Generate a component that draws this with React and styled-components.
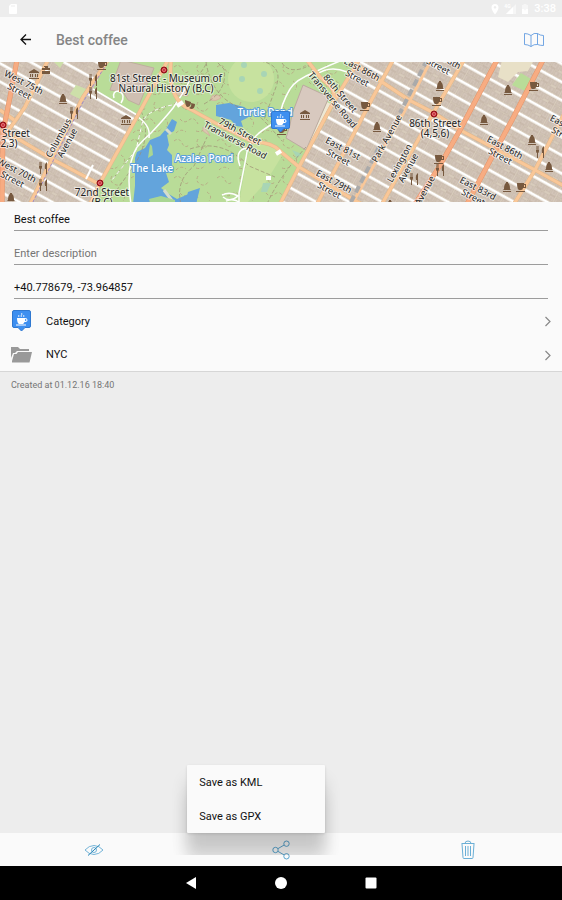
import React from 'react'
import { useState } from "react";
import styled, { createGlobalStyle } from 'styled-components';

const NORTH = 29;

const avenues = [
    "M17 -2 L10 35 L3 70 L2 142",
    "M497 -2 L460 68 L439 105 L415 142",
    "M543 -2 L512 58 L492 95 L467 142",
];

const smallAvenues = [
    "M48 -2 L25 45 L3 76",
    "M108 -2 L83 35 L53 95 L30 142",
    "M168 -2 L138 53 L100 121 L90 142",
    "M359 -2 L333 41 L299 105 L280 142",
    "M393 -2 L372 37 L317 142",
    "M464 -2 L435 48 L405 101 L382 142",
    "M564 52 L535 108 L514 142",
    "M343 -6 L376 16 L409 38 L434 51 L460 68 L535 108 L564 124",
    "M299 105 L349 135 L365 144",
    "M-2 68 L20 78 L50 96 L97 121",
    "M0 48 L14 58",
    "M171 -2 Q169 22 175 33 Q180 43 190 47 L219 63 L253 80 Q272 80 280 89 L299 105",
    "M307 -2 L320 15 L331 25 Q336 32 333 41",
];

const paths = [
    "M131 142 Q125 104 137 85 Q144 77 151 71 Q166 55 173 46 Q183 32 190 18",
    "M340 -1 Q323 6 315 10 Q295 18 290 27 Q281 42 279 58 Q262 68 258 72 Q247 82 246 96 L239 131 L239 142",
    "M138 55 Q151 64 149 76",
    "M240 104 Q234 88 247 86",
    "M222 133 q8 -4 16 1 q-8 7 -15 1 M226 139 q7 -3 13 1",
    "M93 27 L137 53 M114 36 q-2 -7 5 -7 q7 4 2 12",
    "M316 13 Q329 3 347 10",
];

const trails = [
    "M172 43 Q151 47 143 58 L136 88 L112 118",
    "M141 49 Q153 75 133 105 L107 142",
    "M174 20 Q196 25 208 -2",
    "M206 0 Q213 43 254 49 Q266 60 282 79",
    "M190 87 Q222 76 249 104 L275 115",
    "M181 142 Q175 119 194 104 L207 75",
    "M260 -1 Q284 3 276 25 L264 58",
    "M267 142 Q279 115 306 85",
    "M204 42 Q228 29 224 7 L216 -1",
    "M312 2 Q291 14 282 1",
];

const labels = [
    { x: 22, y: 24, rotate: 27, lines: ["West 75th", "Street"] },
    { x: 15, y: 112, rotate: 27, lines: ["West 70th", "Street"] },
    { x: 62, y: 78, rotate: -61, lines: ["Columbus", "Avenue"] },
    { x: 166, y: 21, rotate: 0, lines: ["81st Street - Museum of", "Natural History (B,C)"] },
    { x: 102, y: 135, rotate: 0, lines: ["72nd Street", "(B,C)"] },
    { x: 435, y: 66, rotate: 0, lines: ["86th Street", "(4,5,6)"] },
    { x: 16, y: 71, rotate: 0, lines: ["Street"] },
    { x: 9, y: 81, rotate: 0, lines: ["2,3)"] },
    { x: 238, y: 73, rotate: 28, lines: ["79th Street", "Transverse Road"] },
    { x: 337, y: 34, rotate: 50, lines: ["86th Street", "Transverse Road"] },
    { x: 360, y: 11, rotate: 28, lines: ["East 86th", "Street"] },
    { x: 341, y: 90, rotate: 28, lines: ["East 81st", "Street"] },
    { x: 332, y: 123, rotate: 28, lines: ["East 79th", "Street"] },
    { x: 386, y: 76, rotate: -61, lines: ["Park Avenue"] },
    { x: 403, y: 103, rotate: -61, lines: ["Lexington", "Avenue"] },
    { x: 424, y: 128, rotate: -61, lines: ["Avenue"] },
    { x: 503, y: 89, rotate: 28, lines: ["East 86th", "Street"] },
    { x: 476, y: 130, rotate: 28, lines: ["East 83rd", "Street"] },
    { x: 566, y: 68, rotate: 28, lines: ["East 87th", "Street"] },
    { x: 441, y: -1, rotate: 28, lines: ["East 88th", "Street"] },
];

const waterLabels = [
    { x: 265, y: 54, text: "Turtle Pond" },
    { x: 204, y: 100, text: "Azalea Pond" },
    { x: 152, y: 110, text: "The Lake" },
];

const stations = [[164, 8], [100, 121], [3, 63], [434, 52]];

const places = {
    fork: [[93, 18], [93, 31], [74, 51], [43, 106], [43, 123], [540, 90], [440, 108], [414, 117]],
    bell: [[63, 37], [11, 136], [440, 24], [508, 28], [484, 58], [532, 78], [377, 65], [549, 105], [507, 125], [390, 143]],
    cup: [[102, 3], [437, 39], [534, 24], [439, 97], [521, 125], [365, 44], [282, 68]],
    museum: [[126, 58], [34, 12], [305, 53]],
    bag: [[46, 8]],
    mask: [[190, 42]],
};

const glyphs = {
    fork: "M-4 -6 V-1 Q-4 1 -3 1 V6 H-2 V1 Q-1 1 -1 -1 V-6 H-1.500 V-2 H-2.200 V-6 H-2.800 V-2 H-3.500 V-6Z M4 -6 Q1 -4 2 1 H3 V6 H4Z",
    bell: "M-1 -5 H1 V-4 Q3 -3 3 2 L4 3 H-4 L-3 2 Q-3 -3 -1 -4Z M-4 4 H4 V5 H-4Z",
    cup: "M-4 -4 H3 V-3 H5 V1 H2 Q2 3 0 3 H-2 Q-4 2 -4 -4Z M3 -2 V0 H4 V-2Z M-5 4 H4 V5 H-5Z",
    museum: "M0 -5 L5 -2 V-1 H-5 V-2Z M-4 0 H-3 V3 H-4Z M-2 0 H-1 V3 H-2Z M1 0 H2 V3 H1Z M3 0 H4 V3 H3Z M-5 4 H5 V5 H-5Z",
    bag: "M-2 -4 H2 V-2 H4 V0 H-4 V-2 H-1 V-3 H-2Z M-4 1 H4 V4 H-4Z",
    mask: "M-5 -4 L1 -2 Q1 3 -3 3 Q-5 1 -5 -4Z M1 -1 L5 0 Q5 5 1 5 L-1 4 Q2 3 1 -1Z",
};

function PinShape() {
    return (
        <>
            <path d="M2 .5 H17 Q18.500 .5 18.500 2 V16 Q18.500 17.500 17 17.500 H13 L9.500 21 L6 17.500 H2 Q.5 17.500 .5 16 V2 Q.5 .5 2 .5Z" fill="#3d8ff0" stroke="#2f78d0" />
            <path d="M5 8 H13 Q15.500 8 15.500 10 Q15.500 12 12.500 12 Q12 13.500 11 14 H7 Q5 13 5 8Z M13 9 V11 Q14.500 11 14.500 10 Q14.500 9 13 9Z M4 14.500 H14 V15.500 H4Z" fill="#fff" />
            <path d="M7 7 q-1 -1 0 -2 M9.500 7 q-1 -1 0 -2 t0 -2 M12 7 q-1 -1 0 -2" fill="none" stroke="#fff" strokeWidth=".8" />
        </>
    );
}

function CityMap() {
    return (
        <MapDrawing viewBox="0 0 562 140" preserveAspectRatio="xMidYMid slice" role="img" aria-label="Map around Best coffee">
            <defs>
                <pattern id="blocks" width="46" height="16" patternUnits="userSpaceOnUse" patternTransform={`rotate(${NORTH})`}>
                    <rect width="46" height="16" fill="#e0d5c6" />
                    <path d="M0 3 h9 v5 h-9z M10 3 h7 v6 h-7z M18 3 h5 v5 h-5z M24 3 h9 v6 h-9z M34 3 h4 v5 h-4z M39 3 h6 v6 h-6z M0 9 h5 v6 h-5z M6 9 h9 v6 h-9z M16 10 h5 v5 h-5z M22 9 h7 v6 h-7z M30 10 h8 v5 h-8z M39 9 h6 v6 h-6z" fill="#d3c5b9" stroke="#bbab9d" strokeWidth=".5" />
                    <path d="M3 3 v3 M6 4 v4 M13 3 v4 M27 3 v3 M30 4 v4 M42 3 v4 M3 10 v4 M9 11 v4 M12 10 v4 M26 10 v4 M34 11 v3 M42 11 v4" stroke="#bcac9e" strokeWidth=".6" />
                    <rect width="46" height="2.500" fill="#fff" />
                </pattern>
                <pattern id="woods" width="43" height="37" patternUnits="userSpaceOnUse">
                    <path d="M2 5 q5 -4 8 2 t7 2 M26 3 q-3 5 2 8 t8 -2 M8 20 q4 5 9 1 t9 4 M35 19 q6 4 2 9 M4 34 q5 -5 10 -1 M24 32 q6 2 9 -3" fill="none" stroke="#b59a7c" strokeWidth=".7" strokeDasharray="3 2" />
                </pattern>
            </defs>
            <rect width="562" height="140" fill="url(#blocks)" />
            <path d="M107 -2 H359 L280 142 H90 L137 53 L93 28Z" fill="#b9dc98" />
            <path d="M168 -2 H359 L280 142 H90Z" fill="url(#woods)" />
            <path d="M121 -2 L154 6 L139 43 L128 38 L123 30 L110 28Z" fill="#cfbfb2" stroke="#bfae9f" />
            <path d="M70 32 L76 23 L89 28 L82 38Z M52 -2 H65 L60 6Z" fill="#cddfa9" />
            <path d="M502 -2 H534 L528 9 L518 10 L508 20 L498 15Z" fill="#e8e0c7" />
            <path d="M521 11 L531 17 L525 29 L512 23Z" fill="#b9dc98" />
            <path d="M331 42 L327 40 L306 87 L309 89Z" fill="#eee8d4" />
            <ellipse cx="251" cy="17" rx="23" ry="23" fill="#c7e29f" />
            <path d="M253 81 Q275 82 283 92 L266 120 L246 142 H239 L247 96Z" fill="#c7e29f" />
            <g fill="#a8d5b5">
                <circle cx="242" cy="17" r="3" /><circle cx="244" cy="3" r="3" /><circle cx="264" cy="12" r="3" /><circle cx="260" cy="29" r="3" />
                <path d="M292 88 l10 4 l-5 4z M263 121 l8 0 l-4 9 h-6z" />
            </g>
            <path d="M212 34 q6 -3 9 2 q-5 4 -11 2z M203 65 q5 3 7 9 l-7 -5z M176 23 l10 3 l2 8 l-12 -1z" fill="#dac7ae" stroke="#d49b98" strokeWidth=".5" />
            <path d="M303 23 L329 35 L306 88 L286 76 L290 63 L292 52Z" fill="#d8c9bf" stroke="#bcaaa0" />
            <g fill="#63a4dc">
                <path d="M216 43 L229 41 L244 45 L253 51 L247 56 L241 59 L243 65 L236 64 L231 58 L216 54Z" />
                <path d="M135 96 L137 90 L145 86 L150 78 L160 74 L166 67 L172 57 L177 60 L174 69 L167 73 L169 83 L167 88 L172 93 L172 103 L166 111 L169 120 L161 126 L167 131 L177 137 L191 131 L199 127 L196 142 H133 L135 124Z" />
                <path d="M188 130 L200 126 L196 142 H185Z" />
            </g>
            <path d="M164 128 l9 12 M166 67 l5 5" stroke="#d5dccb" strokeWidth="3" />
            <path d="M150 82 l-2 14 l5 -3 l-1 -9z M149 137 l12 -3 l14 4 v3 h-25z" fill="#a9d693" />
            <g fill="none">
                <g stroke="#9c8c72" strokeWidth=".7" strokeDasharray="4 2">{trails.map(d => <path key={d} d={d} />)}</g>
                <path d="M172 43 Q151 47 143 58 L136 88 L112 118" stroke="#fff" strokeDasharray="4 3" />
                <g stroke="#fff" strokeWidth="1.500">{paths.map(d => <path key={d} d={d} />)}</g>
                <g stroke="#e3b88a" strokeWidth="4">{smallAvenues.map(d => <path key={d} d={d} />)}</g>
                <g stroke="#f9c798" strokeWidth="3">{smallAvenues.map(d => <path key={d} d={d} />)}</g>
                <g stroke="#e69468" strokeWidth="5">{avenues.map(d => <path key={d} d={d} />)}</g>
                <g stroke="#f7ac82" strokeWidth="4">{avenues.map(d => <path key={d} d={d} />)}</g>
                <path d="M431 -2 L404 50 L352 142" stroke="#f9c798" strokeWidth="3" />
                <path d="M427 -2 L400 51 M379 85 L350 142" stroke="#aaa" strokeWidth="4" strokeDasharray="7 4" />
                <path d="M107 1 L83 40 L53 99 L32 142" stroke="#8b7bd0" strokeWidth=".8" strokeDasharray="3 2" />
                <path d="M177 44 l6 -4 M276 92 l5 -3 M266 116 l5 0" stroke="#fff" strokeWidth="4" />
                <path d="M93 103 L86 117" stroke="#fff" strokeWidth="2" />
            </g>
            {Object.keys(places).map(kind => places[kind].map(([x, y]) => (
                <path key={kind + x + y} d={glyphs[kind]} transform={`translate(${x} ${y})`} fill="#77593f" fillRule="evenodd" />
            )))}
            {stations.map(([x, y]) => (
                <g key={x}>
                    <circle cx={x} cy={y} r="3" fill="#c31f2b" stroke="#8f1119" />
                    <circle cx={x} cy={y} r="1.500" fill="none" stroke="#eba0a0" strokeWidth=".7" />
                </g>
            ))}
            {labels.map(({ x, y, rotate, lines }) => (
                <StreetLabel key={x + lines[0]} transform={`translate(${x} ${y}) rotate(${rotate})`} $size={rotate ? 9 : 10}>
                    {lines.map((line, i) => (
                        <tspan key={line} x="0" y={4 + i * 10 - (lines.length - 1) * 5}>{line}</tspan>
                    ))}
                </StreetLabel>
            ))}
            {waterLabels.map(({ x, y, text }) => <WaterLabel key={text} x={x} y={y}>{text}</WaterLabel>)}
            <g transform="translate(271 49)"><PinShape /></g>
        </MapDrawing>
    );
}

function Chevron() {
    return (
        <svg width="8" height="12" viewBox="0 0 8 12" fill="none" stroke="#888" strokeWidth="1.200" aria-hidden="true">
            <path d="M1.500 2 L6 6.500 L1.500 11" />
        </svg>
    );
}

function App() {
    const [name, setName] = useState("Best coffee");
    const [description, setDescription] = useState("");
    const [coordinates, setCoordinates] = useState("+40.778679, -73.964857");
    const [menuOpen, setMenuOpen] = useState(true);

    return (
        <Screen>
            <GlobalStyle />
            <StatusBar>
                <svg width="10" height="12" viewBox="0 0 10 12" aria-hidden="true">
                    <path d="M3 1 H8 Q9 1 9 2 V10 Q9 11 8 11 H2 Q1 11 1 10 V3Z" fill="#fff" />
                    <path d="M4 2 v2 M6 2 v2" stroke="#ededed" />
                </svg>
                <StatusIcons>
                    <svg width="8" height="12" viewBox="0 0 8 12" fill="#fff" aria-hidden="true">
                        <path fillRule="evenodd" d="M4 1 Q7.500 1 7.500 4.500 Q7.500 7 4 11.500 Q.5 7 .5 4.500 Q.5 1 4 1Z M4 3 a1.300 1.300 0 1 0 .01 0Z" />
                    </svg>
                    <Signal>
                        <span>4G</span>
                        <svg width="10" height="10" viewBox="0 0 10 10" aria-hidden="true">
                            <path d="M10 0 V10 H0Z" fill="#f6f6f6" />
                            <path d="M7 3 V10 H0Z" fill="#fff" />
                        </svg>
                    </Signal>
                    <svg width="8" height="12" viewBox="0 0 8 12" aria-hidden="true">
                        <path d="M1 2 H2.500 V1 H5.500 V2 H7 V11 H1Z" fill="#f6f6f6" />
                        <path d="M1 6 H3 L4 8 L5 6 H7 V11 H1Z" fill="#fff" />
                    </svg>
                    <Clock>3:38</Clock>
                </StatusIcons>
            </StatusBar>
            <Header>
                <IconButton aria-label="Back">
                    <svg width="12" height="12" viewBox="0 0 12 12" fill="none" stroke="#111" strokeWidth="1.300">
                        <path d="M11 5.500 H1 M6 .5 L1 5.500 L6 10.500" />
                    </svg>
                </IconButton>
                <Title>Best coffee</Title>
                <IconButton aria-label="Show on map">
                    <svg width="20" height="16" viewBox="0 0 20 16" fill="none" stroke="#639ce0">
                        <path d="M.5 1.500 Q4 1.500 7 3.500 Q10 .5 13.500 1.500 Q16 3.500 19.500 3.500 V13.500 Q16 13.500 13.500 12.500 Q10 12 7 14.500 Q4 12.500 .5 12.500Z M7 3.500 V14.500 M13.500 1.500 V12.500" strokeWidth=".9" />
                    </svg>
                </IconButton>
            </Header>
            <CityMap />
            <Details>
                <Field aria-label="Name" value={name} onChange={e => setName(e.target.value)} />
                <Field aria-label="Description" placeholder="Enter description" value={description} onChange={e => setDescription(e.target.value)} />
                <Field aria-label="Coordinates" value={coordinates} onChange={e => setCoordinates(e.target.value)} />
                <Rows>
                    <Row>
                        <RowIcon>
                            <svg width="19" height="22" viewBox="0 0 19 22" aria-hidden="true"><PinShape /></svg>
                        </RowIcon>
                        <RowText>Category</RowText>
                        <Chevron />
                    </Row>
                    <Row>
                        <RowIcon>
                            <svg width="21" height="16" viewBox="0 0 21 16" fill="#999" aria-hidden="true">
                                <path d="M0 0 H7 L9 2 H18 V4 H6 L4 6 H2 L0 11Z" />
                                <path d="M7 5 H21 L18.500 15.500 H1 V14 L3 7 H5.500Z" />
                            </svg>
                        </RowIcon>
                        <RowText>NYC</RowText>
                        <Chevron />
                    </Row>
                </Rows>
            </Details>
            <Created>Created at 01.12.16 18:40</Created>
            <Toolbar>
                <Slot>
                    <ToolButton aria-label="Hide">
                        <svg width="20" height="16" viewBox="0 0 20 16" fill="none" stroke="#74b4d8">
                            <path d="M1 8 Q5 3.500 10 3.500 Q15 3.500 19 8 Q15 12.500 10 12.500 Q5 12.500 1 8Z" />
                            <circle cx="10" cy="8" r="2.500" />
                            <path d="M4 13.500 L16 2.500" stroke="#2384b8" />
                        </svg>
                    </ToolButton>
                </Slot>
                <Slot>
                    <ToolButton aria-label="Share" aria-expanded={menuOpen} onClick={() => setMenuOpen(!menuOpen)}>
                        <svg width="18" height="20" viewBox="0 0 18 20" fill="none" stroke="#4a9cc9" strokeWidth=".9">
                            <circle cx="3.500" cy="10" r="2.700" />
                            <circle cx="14.500" cy="3.700" r="2.700" />
                            <circle cx="14.500" cy="16.300" r="2.700" />
                            <path d="M6 8.600 L12 5.100 M6 11.400 L12 14.900" />
                        </svg>
                    </ToolButton>
                    {menuOpen && (
                        <MenuArea>
                            <Menu>
                                <MenuItem onClick={() => setMenuOpen(false)}>Save as KML</MenuItem>
                                <MenuItem onClick={() => setMenuOpen(false)}>Save as GPX</MenuItem>
                            </Menu>
                        </MenuArea>
                    )}
                </Slot>
                <Slot>
                    <ToolButton aria-label="Delete">
                        <svg width="14" height="20" viewBox="0 0 14 20" fill="none" stroke="#6aafd6">
                            <path d="M.5 3.500 H13.500 M1 4 L2 17.500 Q2 18.500 3 18.500 H11 Q12 18.500 12 17.500 L13 4 M4 3.500 Q4 1 7 1 Q10 1 10 3.500 M4.500 6 V16 M7 6 V16 M9.500 6 V16" />
                        </svg>
                    </ToolButton>
                </Slot>
            </Toolbar>
            <SystemNav>
                <NavButton aria-label="System back">
                    <svg width="12" height="12" viewBox="0 0 12 12"><path d="M11 0 V12 L1 6Z" fill="#fff" /></svg>
                </NavButton>
                <NavButton aria-label="Home">
                    <svg width="12" height="12" viewBox="0 0 12 12"><circle cx="6" cy="6" r="6" fill="#fff" /></svg>
                </NavButton>
                <NavButton aria-label="Recent apps">
                    <svg width="12" height="12" viewBox="0 0 12 12"><rect x=".5" y=".5" width="11" height="11" rx="1" fill="#fff" /></svg>
                </NavButton>
            </SystemNav>
        </Screen>
    );
}

const GlobalStyle = createGlobalStyle`
    *{
        box-sizing: border-box;
    }
    body{
        margin: 0;
        background: #ededed;
        color: #111;
        font-family: Roboto, "Liberation Sans", sans-serif;
        font-size: 11px;
    }
    button, input{
        font: inherit;
        color: inherit;
    }
    button{
        border: none;
        background: none;
        padding: 0;
        cursor: pointer;
    }
    svg{
        display: block;
        flex: none;
    }
`;

const Screen = styled.div`
    display: flex;
    flex-direction: column;
    min-height: 100vh;
`;

const StatusBar = styled.div`
    display: flex;
    align-items: center;
    justify-content: space-between;
    height: 17px;
    padding: 0 6px 0 8px;
    color: #fff;
`;

const StatusIcons = styled.div`
    display: flex;
    align-items: center;
    gap: 5px;
`;

const Signal = styled.div`
    position: relative;
    padding-left: 2px;
    span{
        position: absolute;
        left: 0;
        top: 0;
        font-size: 5px;
        line-height: 5px;
        font-weight: 700;
    }
`;

const Clock = styled.span`
    font-weight: 500;
`;

const Header = styled.header`
    display: flex;
    align-items: center;
    height: 45px;
    padding: 0 18px 0 20px;
    background: #fafafa;
`;

const IconButton = styled.button`
    display: flex;
`;

const Title = styled.h1`
    flex: 1;
    margin: 0 24px;
    font-size: 14px;
    font-weight: 500;
    color: #858585;
`;

const MapDrawing = styled.svg`
    width: 100%;
    height: 140px;
`;

const StreetLabel = styled.text`
    font-family: "Noto Sans", sans-serif;
    font-size: ${props => props.$size}px;
    fill: #222;
    stroke: rgba(255, 255, 255, 0.6);
    stroke-width: 2px;
    stroke-linejoin: round;
    paint-order: stroke;
    text-anchor: middle;
`;

const WaterLabel = styled(StreetLabel).attrs({ $size: 10 })`
    fill: #fff;
    stroke: #5a9fda;
    font-weight: 500;
`;

const Details = styled.main`
    display: flex;
    flex-direction: column;
    background: #fafafa;
    border-bottom: 1px solid #d6d6d6;
`;

const Field = styled.input`
    height: 34px;
    margin: 0 14px;
    padding: 12px 0 0;
    border: none;
    border-bottom: 1px solid #9c9c9c;
    border-radius: 0;
    background: none;
    outline: none;
    &:first-child{
        height: 29px;
        padding: 6px 0 0;
    }
    &::placeholder{
        color: #757575;
        opacity: 1;
    }
`;

const Rows = styled.div`
    display: flex;
    flex-direction: column;
    padding-top: 5px;
`;

const Row = styled.button`
    display: flex;
    align-items: center;
    height: 34px;
    padding: 0 10px 0 11px;
    text-align: left;
    & + &{
        height: 33px;
    }
`;

const RowIcon = styled.span`
    display: flex;
    justify-content: center;
    width: 21px;
`;

const RowText = styled.span`
    flex: 1;
    margin-left: 14px;
`;

const Created = styled.p`
    flex: 1;
    margin: 0;
    padding: 8px 11px;
    font-size: 9px;
    line-height: 11px;
    color: #757575;
`;

const Toolbar = styled.footer`
    display: flex;
    height: 33px;
    background: #fafafa;
`;

const Slot = styled.div`
    position: relative;
    display: flex;
    flex: 1;
`;

const ToolButton = styled.button`
    display: flex;
    flex: 1;
    align-items: center;
    justify-content: center;
`;

/* clips the menu shadow before it reaches the bottom of the toolbar */
const MenuArea = styled.div`
    position: absolute;
    left: -16px;
    bottom: 11px;
    padding: 16px 16px 22px;
    overflow: hidden;
    pointer-events: none;
`;

const Menu = styled.div`
    display: flex;
    flex-direction: column;
    width: 138px;
    border-radius: 1px;
    background: #fafafa;
    box-shadow: 0 1px 3px rgba(0, 0, 0, 0.12), 0 32px 16px rgba(0, 0, 0, 0.1), 0 16px 16px 1px rgba(0, 0, 0, 0.12);
    pointer-events: auto;
`;

const MenuItem = styled.button`
    height: 34px;
    padding: 0 12px;
    text-align: left;
    &:hover{
        background: #f0f0f0;
    }
`;

const SystemNav = styled.nav`
    display: flex;
    align-items: center;
    justify-content: center;
    gap: 78px;
    height: 34px;
    background: #000;
`;

const NavButton = styled.button`
    display: flex;
`;

export default App
